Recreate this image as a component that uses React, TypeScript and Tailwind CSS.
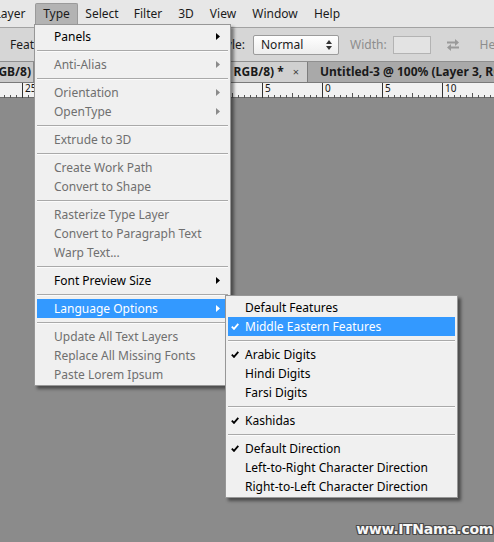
import React from 'react';

type MI = { t: string; on?: boolean; arrow?: boolean; hi?: boolean; check?: boolean } | null;

const mainItems: MI[] = [
  { t: 'Panels', on: true, arrow: true },
  null,
  { t: 'Anti-Alias', arrow: true },
  null,
  { t: 'Orientation', arrow: true },
  { t: 'OpenType', arrow: true },
  null,
  { t: 'Extrude to 3D' },
  null,
  { t: 'Create Work Path' },
  { t: 'Convert to Shape' },
  null,
  { t: 'Rasterize Type Layer' },
  { t: 'Convert to Paragraph Text' },
  { t: 'Warp Text...' },
  null,
  { t: 'Font Preview Size', on: true, arrow: true },
  null,
  { t: 'Language Options', on: true, arrow: true, hi: true },
  null,
  { t: 'Update All Text Layers' },
  { t: 'Replace All Missing Fonts' },
  { t: 'Paste Lorem Ipsum' },
];

const subItems: MI[] = [
  { t: 'Default Features', on: true },
  { t: 'Middle Eastern Features', on: true, hi: true, check: true },
  null,
  { t: 'Arabic Digits', on: true, check: true },
  { t: 'Hindi Digits', on: true },
  { t: 'Farsi Digits', on: true },
  null,
  { t: 'Kashidas', on: true, check: true },
  null,
  { t: 'Default Direction', on: true, check: true },
  { t: 'Left-to-Right Character Direction', on: true },
  { t: 'Right-to-Left Character Direction', on: true },
];

function Row({ it }: { it: Exclude<MI, null> }) {
  const color = it.hi ? 'bg-[#3399ff] text-white' : it.on ? 'text-black' : 'text-[#6f6f6f]';
  const arrowColor = it.hi ? 'text-white' : it.on ? 'text-black' : 'text-[#8a8a8a]';
  return (
    <div className={`relative flex h-[19px] items-center pl-[17px] pr-[8px] ${color}`}>
      {it.check && (
        <svg className="absolute left-[3px] top-[6px]" width="8" height="7" viewBox="0 0 8 7">
          <path d="M0.8 3.6 L3 5.9 L7.3 0.9" fill="none" stroke="currentColor" strokeWidth="1.8" />
        </svg>
      )}
      <span className="flex-1 whitespace-nowrap leading-none">{it.t}</span>
      {it.arrow && (
        <svg className={arrowColor} width="4" height="7" viewBox="0 0 4 7">
          <polygon points="0,0 4,3.5 0,7" fill="currentColor" />
        </svg>
      )}
    </div>
  );
}

function Sep() {
  return (
    <div className="flex h-[9px] flex-col justify-center">
      <div className="h-[1px] bg-[#a9a9a9]" />
      <div className="h-[1px] bg-[#fbfbfb]" />
    </div>
  );
}

function Menu({ items, className }: { items: MI[]; className: string }) {
  return (
    <div
      className={`absolute border border-[#979797] bg-[#f0f0f0] px-[2px] pb-[1px] pt-[2px] shadow-[3px_3px_3px_rgba(0,0,0,0.45)] ${className}`}
    >
      {items.map((it, i) => (it ? <Row key={i} it={it} /> : <Sep key={i} />))}
    </div>
  );
}

function Ruler() {
  const ticks: React.ReactNode[] = [];
  const labels = ['25', '20', '15', '10', '5', '0', '5', '10'];
  for (let k = -1; k < 9; k++) {
    const base = 22 + k * 60;
    ticks.push(<line key={`M${k}`} x1={base + 0.5} y1={0} x2={base + 0.5} y2={15} stroke="#333" strokeWidth="1" />);
    if (k >= 0 && k < labels.length) {
      ticks.push(
        <text key={`T${k}`} x={base + 3} y={9} fontSize="10" fill="#111" fontFamily="Noto Sans, sans-serif">
          {labels[k]}
        </text>
      );
    }
    for (let j = 1; j < 10; j++) {
      const x = base + j * 6 + 0.5;
      const h = j === 5 ? 5 : 3;
      ticks.push(<line key={`m${k}-${j}`} x1={x} y1={15 - h} x2={x} y2={15} stroke="#555" strokeWidth="1" />);
    }
  }
  return (
    <div className="h-[15px] shrink-0 border-b border-[#6e6e6e] bg-[#f1f1f1]">
      <svg width="494" height="15" className="block">
        {ticks}
      </svg>
    </div>
  );
}

export default function App() {
  return (
    <div className="relative flex h-[542px] w-[494px] flex-col overflow-hidden bg-[#8b8b8b] font-['Noto_Sans',sans-serif] text-[12px] text-[#1b1b1b]">
      {/* Menu bar */}
      <div className="flex h-[28px] shrink-0 items-start border-b border-[#a2a2a2] bg-[#e7e7e7] pt-[3px]">
        <div className="ml-[-14px] flex gap-[1px]">
          <div className="flex h-[21px] w-[48px] shrink-0 items-center justify-center">Layer</div>
          <div className="flex h-[21px] w-[43px] shrink-0 items-center justify-center rounded-t-[2px] border border-b-0 border-[#9a9a9a] bg-[#b3b3b3]">
            Type
          </div>
          <div className="flex h-[21px] w-[46px] shrink-0 items-center justify-center">Select</div>
          <div className="flex h-[21px] w-[44px] shrink-0 items-center justify-center">Filter</div>
          <div className="flex h-[21px] w-[30px] shrink-0 items-center justify-center">3D</div>
          <div className="flex h-[21px] w-[42px] shrink-0 items-center justify-center">View</div>
          <div className="flex h-[21px] w-[60px] shrink-0 items-center justify-center">Window</div>
          <div className="flex h-[21px] w-[42px] shrink-0 items-center justify-center">Help</div>
        </div>
      </div>

      {/* Options bar */}
      <div className="flex h-[34px] shrink-0 items-center overflow-hidden border-b border-[#8f8f8f] bg-[#d6d6d6]">
        <div className="flex w-[245px] shrink-0 items-center justify-between pl-[10px]">
          <span className="whitespace-nowrap">Feather: 0 px</span>
          <span>Style:</span>
        </div>
        <div className="ml-[8px] flex h-[20px] w-[86px] shrink-0 items-center justify-between rounded-[2px] border border-[#9b9b9b] bg-gradient-to-b from-[#ffffff] to-[#ededed] pl-[7px] pr-[6px]">
          <span>Normal</span>
          <svg width="6" height="10" viewBox="0 0 6 10">
            <polygon points="3,0 6,4 0,4" fill="#333" />
            <polygon points="0,6 6,6 3,10" fill="#333" />
          </svg>
        </div>
        <span className="ml-[11px] shrink-0 text-[#8d8d8d]">Width:</span>
        <div className="ml-[6px] h-[18px] w-[38px] shrink-0 border border-[#b3b3b3] bg-[#e3e3e3]" />
        <svg className="ml-[15px] shrink-0" width="14" height="14" viewBox="0 0 14 14">
          <path d="M1 4.5 H10" stroke="#9a9a9a" strokeWidth="2" />
          <polygon points="9,1 13,4.5 9,8" fill="#9a9a9a" />
          <path d="M4 9.5 H13" stroke="#9a9a9a" strokeWidth="2" />
          <polygon points="5,6 1,9.5 5,13" fill="#9a9a9a" />
        </svg>
        <span className="ml-[20px] shrink-0 whitespace-nowrap text-[#8d8d8d]">Height:</span>
      </div>

      {/* Tabs */}
      <div className="flex h-[21px] shrink-0 items-center border-b border-[#7a7a7a] bg-[#a9a9a9] text-[12px] font-bold text-[#1a1a1a]">
        <div className="flex h-full w-[34px] shrink-0 items-center justify-end overflow-hidden whitespace-nowrap border-r border-[#8a8a8a] bg-[#c9c9c9] pr-[2px]">
          Untitled-1 @ 100% (Layer 1, RGB/8)
        </div>
        <div className="flex h-full w-[274px] shrink-0 items-center justify-end overflow-hidden whitespace-nowrap border-r border-[#7d7d7d] bg-[#d0d0d0] pr-[8px]">
          <span>Untitled-2 @ 100% (Layer 2, RGB/8) *</span>
          <span className="ml-[9px] text-[11px] font-normal text-[#444]">×</span>
        </div>
        <div className="flex h-full flex-1 items-center overflow-hidden whitespace-nowrap pl-[12px]">
          Untitled-3 @ 100% (Layer 3, RGB/8)
        </div>
      </div>

      <Ruler />

      {/* Canvas */}
      <div className="flex flex-1 items-end justify-end pb-[2px] pr-[1px]">
        <span className="font-['DejaVu_Sans',sans-serif] text-[14px] font-bold tracking-[-0.3px] text-[#f7f7f7] [text-shadow:1px_0_#4a4a4a,-1px_0_#4a4a4a,0_1px_#4a4a4a,0_-1px_#4a4a4a,1px_1px_#4a4a4a,-1px_-1px_#4a4a4a,1px_-1px_#4a4a4a,-1px_1px_#4a4a4a]">
          www.ITNama.com
        </span>
      </div>

      {/* Menus */}
      <Menu items={mainItems} className="left-[34px] top-[24px] w-[197px]" />
      <Menu items={subItems} className="left-[225px] top-[295px] w-[233px]" />
    </div>
  );
}
